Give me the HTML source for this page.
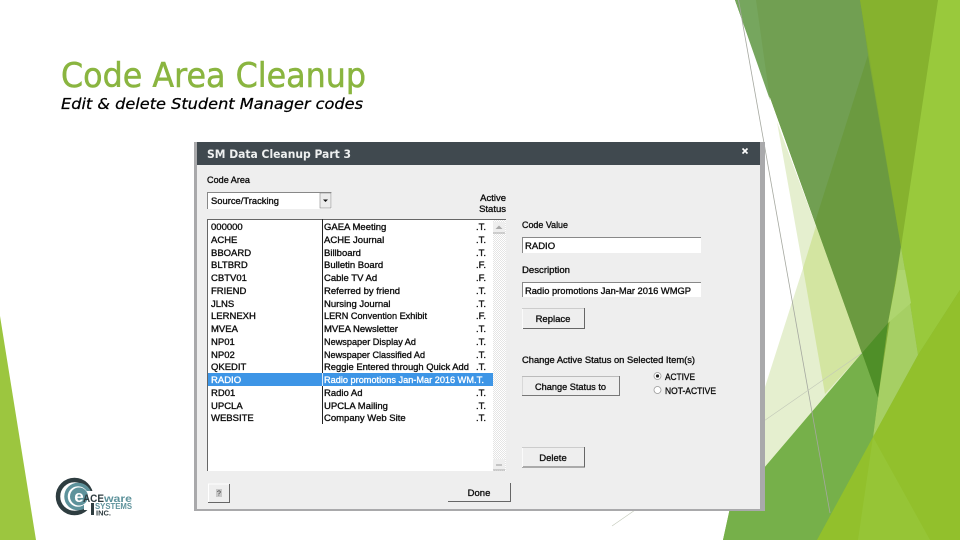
<!DOCTYPE html>
<html><head><meta charset="utf-8"><title>Code Area Cleanup</title>
<style>
html,body{margin:0;padding:0;background:#fff;width:960px;height:540px;overflow:hidden}
svg{display:block}
.t{font-family:"Liberation Sans",sans-serif;font-size:9.5px;fill:#111;stroke:#111;stroke-width:.34px}
</style></head><body>
<svg width="960" height="540" viewBox="0 0 960 540" xmlns="http://www.w3.org/2000/svg">
<defs>
<pattern id="d" width="2" height="2" patternUnits="userSpaceOnUse"><rect width="2" height="2" fill="#fff"/><rect width="1" height="1" fill="#e4e4e4"/><rect x="1" y="1" width="1" height="1" fill="#e4e4e4"/></pattern>
<filter id="b" x="-2%" y="-2%" width="104%" height="104%"><feGaussianBlur stdDeviation="0.32"/></filter>
</defs>
<!-- background -->
<polygon points="0,316 36,540 0,540" fill="#9cc63f"/>
<polygon points="777,122 816,226 862,353 730,508 765,387 803,268" fill="#e5efcf"/>
<polygon points="816,226 862,353 825,394 803,268" fill="#d3e5a1"/>
<polygon points="862,353 900,300 960,290 960,540 817,540 723,540 730,508" fill="#80b63c"/>
<polygon points="735,0 960,0 960,300 878,398" fill="#7fab35"/>
<polygon points="735,0 860,0 868,55 901,247 888,323 878,398" fill="#6b9a40"/>
<polygon points="735,0 860,0 868,55 815,222" fill="#719f52"/>
<polygon points="735,0 756,0 770,100" fill="#76a65e"/>
<polygon points="860,0 938,0 901,247" fill="#86b22e"/>
<polygon points="938,0 960,0 960,290 918,355 905,270 901,247" fill="#99c93c"/>
<polygon points="901,247 905,270 918,355 873,437 878,398" fill="#a6cf64"/>
<polygon points="898,270 905,270 911,303 888,323" fill="#aed56f"/>
<polygon points="862,353 888,323 878,398" fill="#4f8f28"/>
<polygon points="862,353 878,398 873,437 817,540 723,540 730,508" fill="#76b04a"/>
<polygon points="960,290 918,355 873,437 817,540 960,540" fill="#92c02c"/>
<polygon points="873,437 858,540 930,540" fill="#96c536"/>
<line x1="738.500" y1="0" x2="830" y2="513" stroke="#a5a8a0" stroke-width=".8"/>
<line x1="612" y1="526" x2="862" y2="353" stroke="#c2c8b8" stroke-width=".6"/>
<!-- heading -->
<g filter="url(#b)">
<text x="61" y="87" font-family="'DejaVu Sans',sans-serif" font-size="34" fill="#8ab53f" stroke="#8ab53f" stroke-width=".5" textLength="305" lengthAdjust="spacingAndGlyphs">Code Area Cleanup</text>
<text x="61" y="109" font-family="'DejaVu Sans',sans-serif" font-style="italic" font-size="15" fill="#000" stroke="#000" stroke-width=".25" textLength="302" lengthAdjust="spacingAndGlyphs">Edit &amp; delete Student Manager codes</text>
<!-- logo -->
<circle cx="74.500" cy="496.500" r="16.500" fill="none" stroke="#2f3c40" stroke-width="4.500"/>
<circle cx="78" cy="496.500" r="12" fill="none" stroke="#5d929b" stroke-width="3.500"/>
<rect x="84" y="491" width="50" height="19" fill="#fff"/>
<rect x="94" y="509" width="40" height="8" fill="#fff"/>
<circle cx="79" cy="496.500" r="9" fill="#5d929b"/>
<text x="79" y="502" text-anchor="middle" font-family="'Liberation Sans',sans-serif" font-weight="bold" font-size="17" fill="#fff">e</text>
<text x="83" y="502" font-family="'Liberation Sans',sans-serif" font-weight="bold" font-size="11" fill="#2f3c40" textLength="21" lengthAdjust="spacingAndGlyphs">ACE</text>
<text x="104" y="502" font-family="'Liberation Sans',sans-serif" font-weight="bold" font-size="10.500" fill="#5d929b" textLength="28" lengthAdjust="spacingAndGlyphs">ware</text>
<text x="95" y="509" font-family="'Liberation Sans',sans-serif" font-weight="bold" font-size="8" fill="#5d929b" textLength="37" lengthAdjust="spacingAndGlyphs">SYSTEMS</text>
<text x="96" y="515.500" font-family="'Liberation Sans',sans-serif" font-weight="bold" font-size="7" fill="#2f3c40" textLength="15" lengthAdjust="spacingAndGlyphs">INC.</text>
<rect x="91" y="503" width="3" height="12" fill="#2f3c40"/>
</g>
<!-- dialog -->
<rect x="194" y="142" width="571" height="369" fill="#a9a9ab"/>
<rect x="197" y="142" width="563" height="367" fill="#eeeeee"/>
<rect x="197" y="142" width="563" height="23" fill="#40494f"/>
<g filter="url(#b)">
<text x="207" y="158" font-family="'DejaVu Sans',sans-serif" font-weight="bold" font-size="11.500" fill="#eef0f0" textLength="144" lengthAdjust="spacingAndGlyphs">SM Data Cleanup Part 3</text>
<path d="M742.500 148.500L747.500 153.500M747.500 148.500L742.500 153.500" stroke="#fff" stroke-width="1.600"/>
<text class="t" x="207" y="183" textLength="43" lengthAdjust="spacingAndGlyphs">Code Area</text>
</g>
<!-- combo -->
<rect x="207" y="192" width="125" height="17" fill="#fff"/>
<path d="M207.500 209V192.500H331.500" fill="none" stroke="#888"/>
<rect x="320" y="193" width="11" height="15" fill="#ececec" stroke="#888" stroke-width=".6"/>
<path d="M323 199.500h5l-2.500 2.500z" fill="#111"/>
<!-- list -->
<rect x="207" y="219" width="287" height="252" fill="#fff"/>
<rect x="493" y="220" width="13" height="251" fill="url(#d)"/>
<path d="M207.500 471V219.500H506" fill="none" stroke="#666"/>
<rect x="493" y="222" width="12" height="11" fill="#eee"/>
<path d="M495.500 229l3.500-3.500 3.500 3.500z" fill="#aaa"/>
<path d="M493 233h12" stroke="#aaa"/>
<rect x="493" y="459" width="12" height="11" fill="#eee"/>
<path d="M496 465h6" stroke="#999"/>
<path d="M493 470h12" stroke="#aaa"/>
<rect x="208" y="373" width="285" height="13" fill="#3d95e6"/>
<line x1="322.500" y1="219" x2="322.500" y2="424" stroke="#222"/>
<line x1="322.500" y1="373" x2="322.500" y2="386" stroke="#d8e8f8"/>
<g filter="url(#b)">
<text class="t" x="211" y="204" textLength="68" lengthAdjust="spacingAndGlyphs">Source/Tracking</text>
<text class="t" x="506" y="201" text-anchor="end">Active</text>
<text class="t" x="506" y="212" text-anchor="end">Status</text>
<text class="t" x="211" y="230">000000</text><text class="t" x="324" y="230">GAEA Meeting</text><text class="t" x="476" y="230">.T.</text>
<text class="t" x="211" y="243">ACHE</text><text class="t" x="324" y="243">ACHE Journal</text><text class="t" x="476" y="243">.T.</text>
<text class="t" x="211" y="256">BBOARD</text><text class="t" x="324" y="256">Billboard</text><text class="t" x="476" y="256">.T.</text>
<text class="t" x="211" y="268">BLTBRD</text><text class="t" x="324" y="268">Bulletin Board</text><text class="t" x="476" y="268">.F.</text>
<text class="t" x="211" y="281">CBTV01</text><text class="t" x="324" y="281">Cable TV Ad</text><text class="t" x="476" y="281">.F.</text>
<text class="t" x="211" y="294">FRIEND</text><text class="t" x="324" y="294">Referred by friend</text><text class="t" x="476" y="294">.T.</text>
<text class="t" x="211" y="307">JLNS</text><text class="t" x="324" y="307">Nursing Journal</text><text class="t" x="476" y="307">.T.</text>
<text class="t" x="211" y="319">LERNEXH</text><text class="t" x="324" y="319" textLength="103" lengthAdjust="spacingAndGlyphs">LERN Convention Exhibit</text><text class="t" x="476" y="319">.F.</text>
<text class="t" x="211" y="332">MVEA</text><text class="t" x="324" y="332">MVEA Newsletter</text><text class="t" x="476" y="332">.T.</text>
<text class="t" x="211" y="345">NP01</text><text class="t" x="324" y="345" textLength="92" lengthAdjust="spacingAndGlyphs">Newspaper Display Ad</text><text class="t" x="476" y="345">.T.</text>
<text class="t" x="211" y="358">NP02</text><text class="t" x="324" y="358" textLength="101" lengthAdjust="spacingAndGlyphs">Newspaper Classified Ad</text><text class="t" x="476" y="358">.T.</text>
<text class="t" x="211" y="370">QKEDIT</text><text class="t" x="324" y="370" textLength="145" lengthAdjust="spacingAndGlyphs">Reggie Entered through Quick Add</text><text class="t" x="476" y="370">.T.</text>
<text class="t" x="211" y="383" style="fill:#fff;stroke:#fff">RADIO</text><text class="t" x="324" y="383" textLength="150" lengthAdjust="spacingAndGlyphs" style="fill:#fff;stroke:#fff">Radio promotions Jan-Mar 2016 WM</text><text class="t" x="474" y="383" style="fill:#fff;stroke:#fff">.T.</text>
<text class="t" x="211" y="396">RD01</text><text class="t" x="324" y="396">Radio Ad</text><text class="t" x="476" y="396">.T.</text>
<text class="t" x="211" y="409">UPCLA</text><text class="t" x="324" y="409">UPCLA Mailing</text><text class="t" x="476" y="409">.T.</text>
<text class="t" x="211" y="421">WEBSITE</text><text class="t" x="324" y="421">Company Web Site</text><text class="t" x="476" y="421">.T.</text>
</g>
<!-- right column -->
<rect x="522" y="237" width="179" height="16" fill="#fff"/>
<path d="M522.500 253V237.500H701" fill="none" stroke="#888"/>
<rect x="522" y="282" width="179" height="15" fill="#fff"/>
<path d="M522.500 297V282.500H701" fill="none" stroke="#888"/>
<!-- buttons -->
<g fill="none">
<path d="M522 308.500H584" stroke="#ccc"/><path d="M584.500 308V328.500H522" stroke="#666"/><path d="M522.500 329V309" stroke="#fafafa"/>
<path d="M522 376.500H619" stroke="#bbb"/><path d="M619.500 376V395.500H522" stroke="#777"/><path d="M522.500 395V377" stroke="#d8d8d8"/>
<path d="M522 447.500H584" stroke="#ccc"/><path d="M584.500 447V467H522" stroke="#666"/><path d="M522.500 467V448" stroke="#fafafa"/>
<path d="M448 501.500H510.500V483" stroke="#666"/>
<path d="M208 502.500H229.500V484" stroke="#666"/><path d="M208.500 502V484H229" stroke="#fff"/>
</g>
<rect x="216" y="489" width="6" height="8" fill="#c8c8c8"/>
<g filter="url(#b)">
<text class="t" x="522" y="228" textLength="46" lengthAdjust="spacingAndGlyphs">Code Value</text>
<text class="t" x="525" y="249">RADIO</text>
<text class="t" x="522" y="273" textLength="48" lengthAdjust="spacingAndGlyphs">Description</text>
<text class="t" x="525" y="294" textLength="166" lengthAdjust="spacingAndGlyphs">Radio promotions Jan-Mar 2016 WMGP</text>
<text class="t" x="522" y="363" textLength="173" lengthAdjust="spacingAndGlyphs">Change Active Status on Selected Item(s)</text>
<text class="t" x="553" y="322" text-anchor="middle">Replace</text>
<text class="t" x="570.500" y="390" text-anchor="middle" textLength="71" lengthAdjust="spacingAndGlyphs">Change Status to</text>
<text class="t" x="553" y="461" text-anchor="middle">Delete</text>
<text class="t" x="479" y="496" text-anchor="middle">Done</text>
<text x="219" y="495.500" text-anchor="middle" font-family="'Liberation Sans',sans-serif" font-size="7" fill="#333">?</text>
<circle cx="657.500" cy="376" r="3.500" fill="#fff" stroke="#999" stroke-width=".8"/>
<circle cx="657.500" cy="376" r="1.600" fill="#222"/>
<circle cx="657.500" cy="390" r="3.500" fill="#fff" stroke="#999" stroke-width=".8"/>
<text class="t" x="665" y="380" textLength="30" lengthAdjust="spacingAndGlyphs">ACTIVE</text>
<text class="t" x="665" y="394" textLength="51" lengthAdjust="spacingAndGlyphs">NOT-ACTIVE</text>
</g>
</svg>
</body></html>
